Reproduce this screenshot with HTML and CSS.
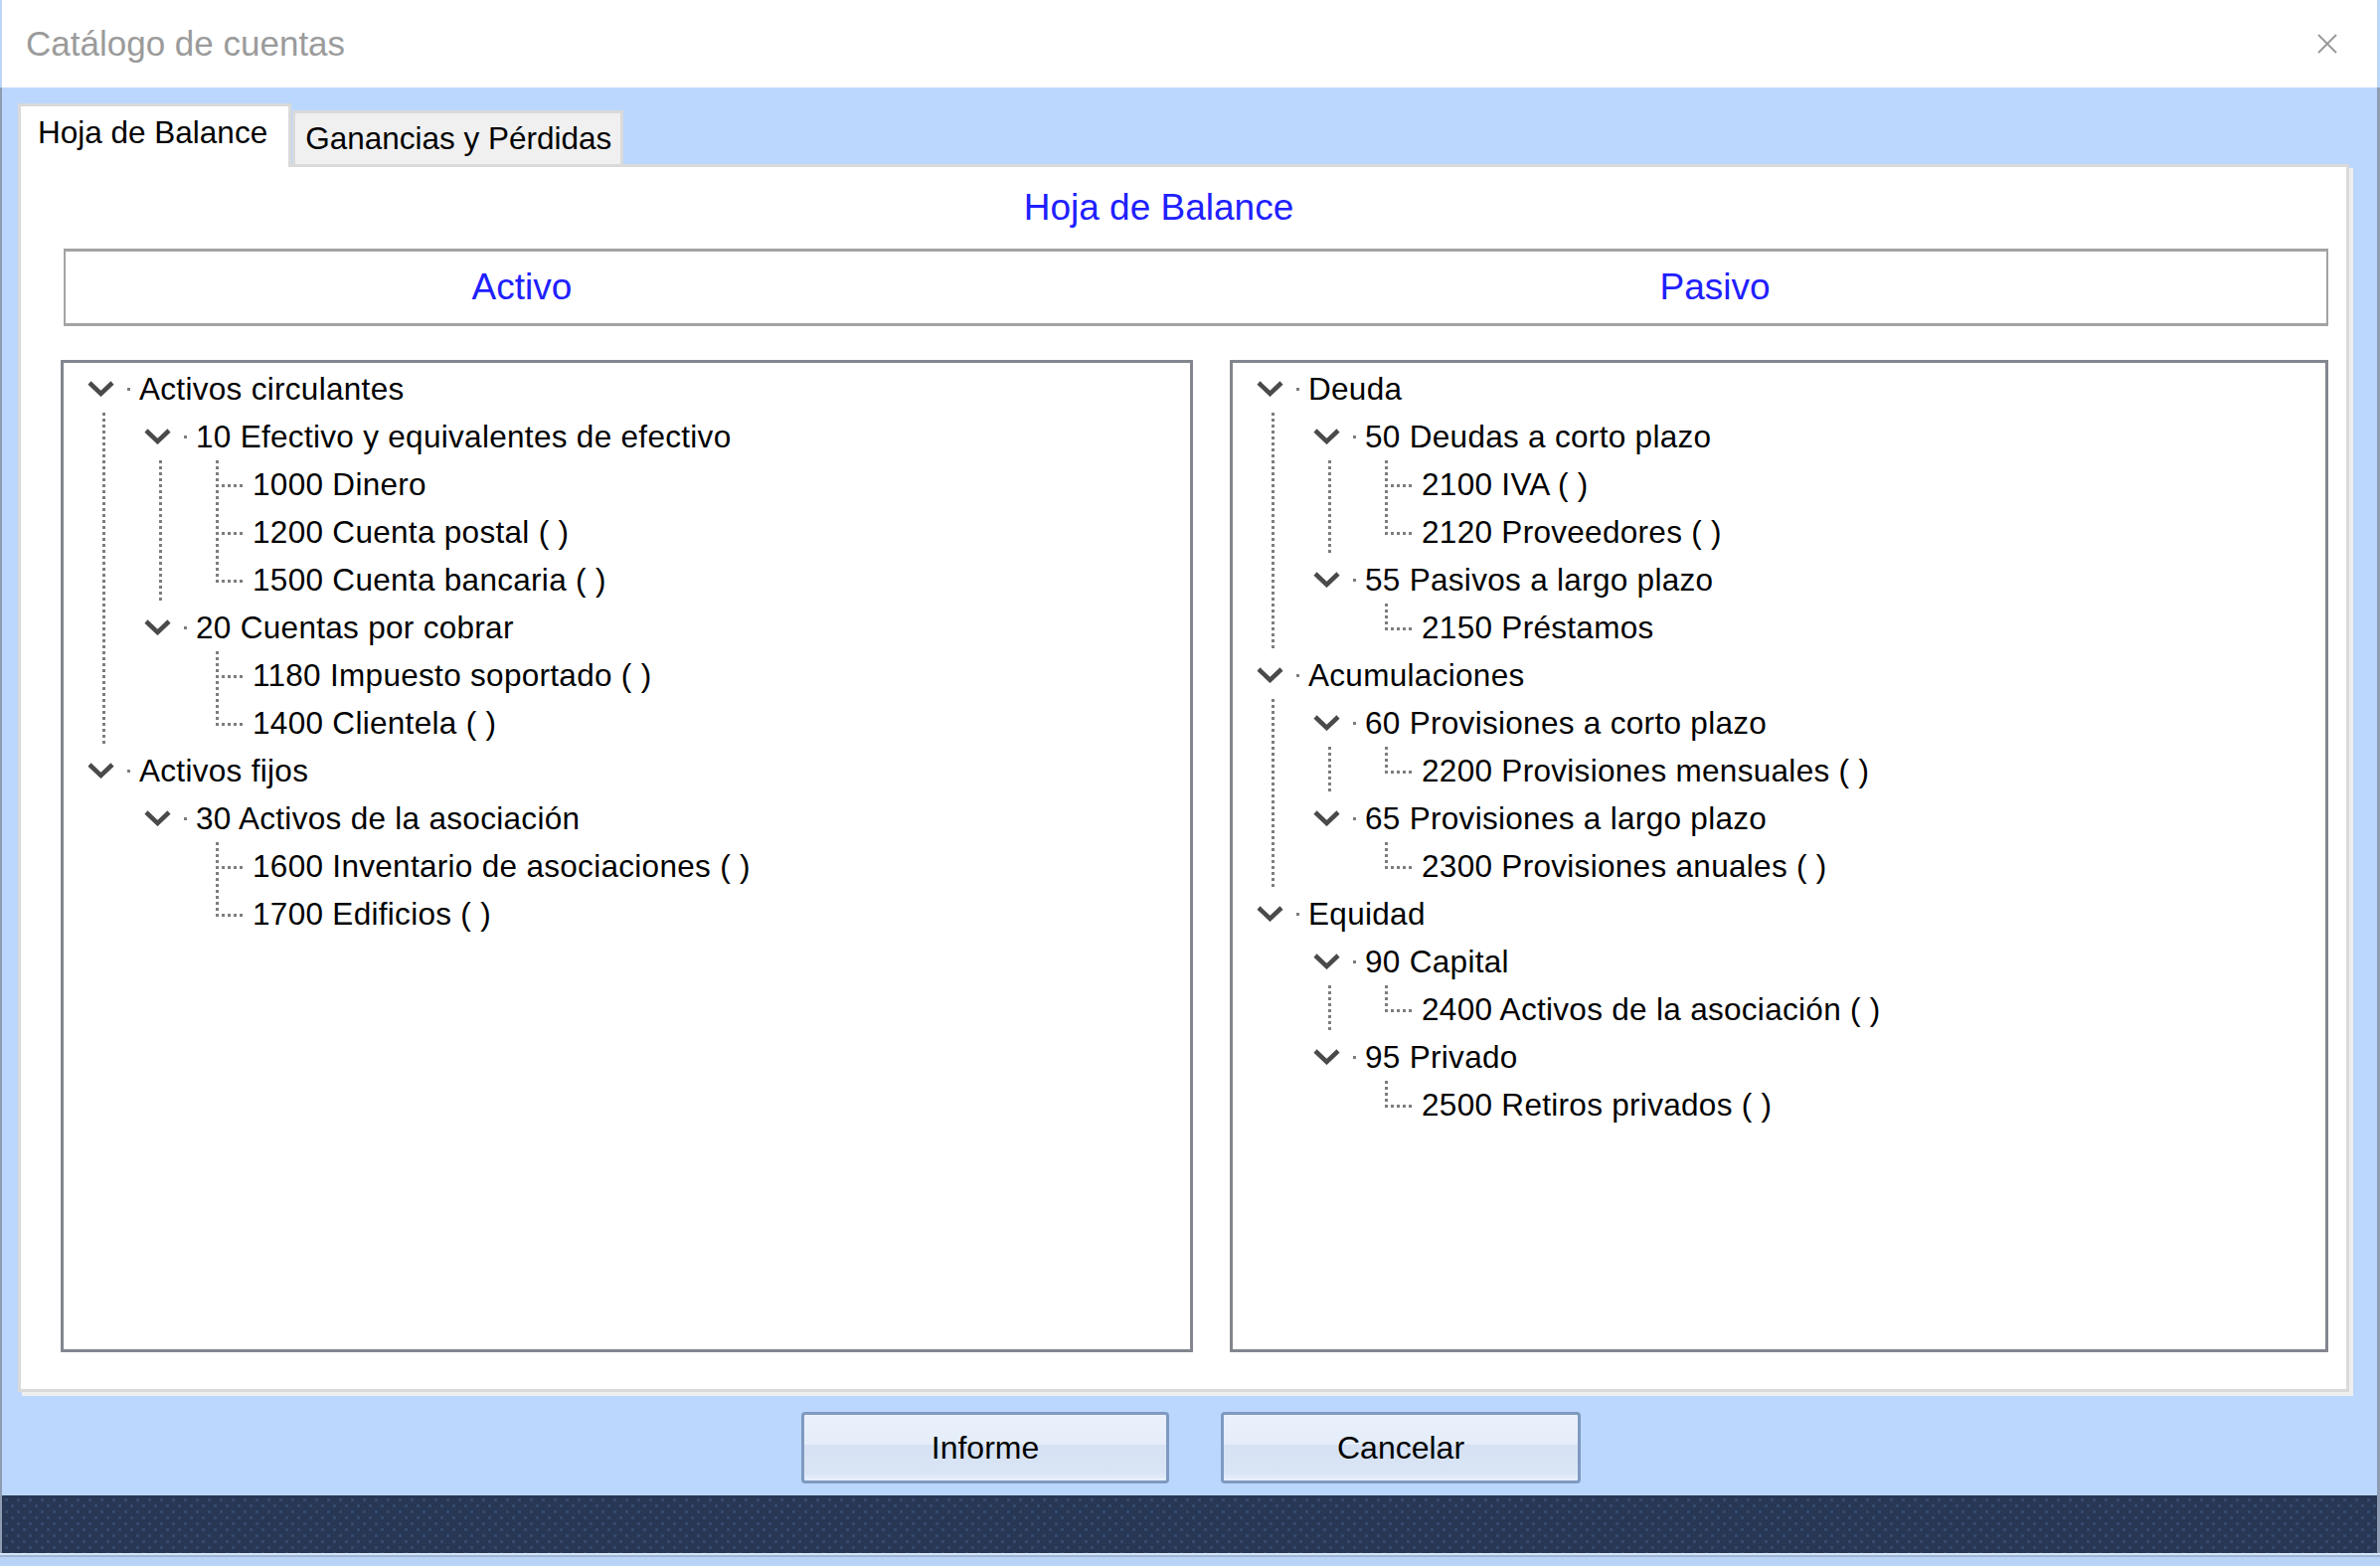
FILE: index.html
```html
<!DOCTYPE html>
<html lang="es">
<head>
<meta charset="utf-8">
<title>Catálogo de cuentas</title>
<link rel="stylesheet" href="styles.css">
</head>
<body>
<div class="window">
  <div class="titlebar">
    <span class="title">Catálogo de cuentas</span>
    <svg class="close" width="20" height="20" viewBox="0 0 20 20"><path d="M1 1 L19 19 M19 1 L1 19" stroke="#9a9a9a" stroke-width="2" fill="none"/></svg>
  </div>
  <div class="main">
    <div class="tabs">
      <div class="tab active">Hoja de Balance</div>
      <div class="tab">Ganancias y Pérdidas</div>
    </div>
    <div class="panel">
      <div class="heading">Hoja de Balance</div>
      <div class="header-box">
        <div class="hcell">Activo</div>
        <div class="hcell">Pasivo</div>
      </div>
      <div class="trees">
        <div class="tree">
          <div class="row"><span class="node"><svg width="27" height="16" viewBox="0 0 27 16"><path d="M2 2 L13.5 13 L25 2" stroke="#4a4a4a" stroke-width="4.5" fill="none"/></svg><i class="dot"></i></span><span class="t">Activos circulantes</span></div>
          <div class="row"><span class="g on"></span><span class="node"><svg width="27" height="16" viewBox="0 0 27 16"><path d="M2 2 L13.5 13 L25 2" stroke="#4a4a4a" stroke-width="4.5" fill="none"/></svg><i class="dot"></i></span><span class="t">10 Efectivo y equivalentes de efectivo</span></div>
          <div class="row"><span class="g on"></span><span class="g on"></span><span class="leaf"></span><span class="t">1000 Dinero</span></div>
          <div class="row"><span class="g on"></span><span class="g on"></span><span class="leaf"></span><span class="t">1200 Cuenta postal ( )</span></div>
          <div class="row"><span class="g on"></span><span class="g on"></span><span class="leaf last"></span><span class="t">1500 Cuenta bancaria ( )</span></div>
          <div class="row"><span class="g on"></span><span class="node"><svg width="27" height="16" viewBox="0 0 27 16"><path d="M2 2 L13.5 13 L25 2" stroke="#4a4a4a" stroke-width="4.5" fill="none"/></svg><i class="dot"></i></span><span class="t">20 Cuentas por cobrar</span></div>
          <div class="row"><span class="g on"></span><span class="g"></span><span class="leaf"></span><span class="t">1180 Impuesto soportado ( )</span></div>
          <div class="row"><span class="g on"></span><span class="g"></span><span class="leaf last"></span><span class="t">1400 Clientela ( )</span></div>
          <div class="row"><span class="node"><svg width="27" height="16" viewBox="0 0 27 16"><path d="M2 2 L13.5 13 L25 2" stroke="#4a4a4a" stroke-width="4.5" fill="none"/></svg><i class="dot"></i></span><span class="t">Activos fijos</span></div>
          <div class="row"><span class="g"></span><span class="node"><svg width="27" height="16" viewBox="0 0 27 16"><path d="M2 2 L13.5 13 L25 2" stroke="#4a4a4a" stroke-width="4.5" fill="none"/></svg><i class="dot"></i></span><span class="t">30 Activos de la asociación</span></div>
          <div class="row"><span class="g"></span><span class="g"></span><span class="leaf"></span><span class="t">1600 Inventario de asociaciones ( )</span></div>
          <div class="row"><span class="g"></span><span class="g"></span><span class="leaf last"></span><span class="t">1700 Edificios ( )</span></div>
        </div>
        <div class="tree">
          <div class="row"><span class="node"><svg width="27" height="16" viewBox="0 0 27 16"><path d="M2 2 L13.5 13 L25 2" stroke="#4a4a4a" stroke-width="4.5" fill="none"/></svg><i class="dot"></i></span><span class="t">Deuda</span></div>
          <div class="row"><span class="g on"></span><span class="node"><svg width="27" height="16" viewBox="0 0 27 16"><path d="M2 2 L13.5 13 L25 2" stroke="#4a4a4a" stroke-width="4.5" fill="none"/></svg><i class="dot"></i></span><span class="t">50 Deudas a corto plazo</span></div>
          <div class="row"><span class="g on"></span><span class="g on"></span><span class="leaf"></span><span class="t">2100 IVA ( )</span></div>
          <div class="row"><span class="g on"></span><span class="g on"></span><span class="leaf last"></span><span class="t">2120 Proveedores ( )</span></div>
          <div class="row"><span class="g on"></span><span class="node"><svg width="27" height="16" viewBox="0 0 27 16"><path d="M2 2 L13.5 13 L25 2" stroke="#4a4a4a" stroke-width="4.5" fill="none"/></svg><i class="dot"></i></span><span class="t">55 Pasivos a largo plazo</span></div>
          <div class="row"><span class="g on"></span><span class="g"></span><span class="leaf last"></span><span class="t">2150 Préstamos</span></div>
          <div class="row"><span class="node"><svg width="27" height="16" viewBox="0 0 27 16"><path d="M2 2 L13.5 13 L25 2" stroke="#4a4a4a" stroke-width="4.5" fill="none"/></svg><i class="dot"></i></span><span class="t">Acumulaciones</span></div>
          <div class="row"><span class="g on"></span><span class="node"><svg width="27" height="16" viewBox="0 0 27 16"><path d="M2 2 L13.5 13 L25 2" stroke="#4a4a4a" stroke-width="4.5" fill="none"/></svg><i class="dot"></i></span><span class="t">60 Provisiones a corto plazo</span></div>
          <div class="row"><span class="g on"></span><span class="g on"></span><span class="leaf last"></span><span class="t">2200 Provisiones mensuales ( )</span></div>
          <div class="row"><span class="g on"></span><span class="node"><svg width="27" height="16" viewBox="0 0 27 16"><path d="M2 2 L13.5 13 L25 2" stroke="#4a4a4a" stroke-width="4.5" fill="none"/></svg><i class="dot"></i></span><span class="t">65 Provisiones a largo plazo</span></div>
          <div class="row"><span class="g on"></span><span class="g"></span><span class="leaf last"></span><span class="t">2300 Provisiones anuales ( )</span></div>
          <div class="row"><span class="node"><svg width="27" height="16" viewBox="0 0 27 16"><path d="M2 2 L13.5 13 L25 2" stroke="#4a4a4a" stroke-width="4.5" fill="none"/></svg><i class="dot"></i></span><span class="t">Equidad</span></div>
          <div class="row"><span class="g"></span><span class="node"><svg width="27" height="16" viewBox="0 0 27 16"><path d="M2 2 L13.5 13 L25 2" stroke="#4a4a4a" stroke-width="4.5" fill="none"/></svg><i class="dot"></i></span><span class="t">90 Capital</span></div>
          <div class="row"><span class="g"></span><span class="g on"></span><span class="leaf last"></span><span class="t">2400 Activos de la asociación ( )</span></div>
          <div class="row"><span class="g"></span><span class="node"><svg width="27" height="16" viewBox="0 0 27 16"><path d="M2 2 L13.5 13 L25 2" stroke="#4a4a4a" stroke-width="4.5" fill="none"/></svg><i class="dot"></i></span><span class="t">95 Privado</span></div>
          <div class="row"><span class="g"></span><span class="g"></span><span class="leaf last"></span><span class="t">2500 Retiros privados ( )</span></div>
        </div>
      </div>
    </div>
    <div class="buttons">
      <button class="btn btn-informe">Informe</button>
      <button class="btn btn-cancelar">Cancelar</button>
    </div>
  </div>
  <div class="status"></div>
  <div class="bottom"></div>
</div>
</body>
</html>
```

FILE: styles.css
```css
html, body {
  margin: 0;
  padding: 0;
}
body {
  width: 2394px;
  height: 1575px;
  overflow: hidden;
  background: #b9d3f7;
  font-family: "Liberation Sans", Arial, sans-serif;
  color: #000;
}
.window {
  width: 2394px;
}
.titlebar {
  box-sizing: border-box;
  height: 88px;
  background: #fff;
  border-left: 2px solid #bcd6f8;
  border-right: 3px solid #bcd6f8;
  display: flex;
  align-items: center;
  justify-content: space-between;
  padding: 0 40px 0 24px;
}
.title {
  font-size: 35px;
  color: #9b9b9b;
}
.close {
  display: block;
}
.main {
  box-sizing: border-box;
  height: 1416px;
  background: #bbd7fd;
  border-left: 2px solid #8f9db3;
  border-right: 3px solid #8f9db3;
  padding: 16px 0 12px 16px;
}
.tabs {
  display: flex;
  align-items: flex-end;
  height: 61px;
  position: relative;
  z-index: 1;
}
.tab {
  box-sizing: border-box;
  height: 54px;
  border: 3px solid #dadada;
  border-bottom: none;
  background: #f0f0f0;
  font-size: 31.5px;
  line-height: 40px;
  padding: 5px 9px 0 10px;
  white-space: nowrap;
}
.tab.active {
  height: 64px;
  margin-bottom: -3px;
  background: #fff;
  padding: 6px 21px 0 17px;
  margin-right: 1px;
}
.panel {
  box-sizing: border-box;
  width: 2345px;
  height: 1235px;
  background: #fff;
  border: 3px solid #dadada;
  box-shadow: 4px 4px 0 #efefef;
  padding: 0 0 37px 0;
}
.heading {
  margin-top: 16px;
  height: 50px;
  line-height: 50px;
  text-align: center;
  padding-right: 50px;
  font-size: 37px;
  color: #2020ff;
}
.header-box {
  box-sizing: border-box;
  margin: 16px 18px 0 43px;
  height: 78px;
  border-top: 3px solid #a3a3a3;
  border-bottom: 3px solid #a3a3a3;
  border-left: 2px solid #a3a3a3;
  border-right: 2px solid #a3a3a3;
  display: grid;
  grid-template-columns: 918px 1fr;
  column-gap: 126px;
  align-items: center;
}
.hcell {
  text-align: center;
  font-size: 37px;
  color: #2020ff;
}
.trees {
  margin: 34px 18px 0 40px;
  height: 998px;
  display: grid;
  grid-template-columns: 1139px 1fr;
  column-gap: 37px;
}
.tree {
  box-sizing: border-box;
  border: 3px solid #83868e;
  background: #fff;
  padding-top: 2px;
  overflow: hidden;
}
.row {
  display: flex;
  align-items: center;
  height: 48px;
}
.g {
  flex: none;
  width: 57px;
  align-self: stretch;
}
.g.on {
  background-image: repeating-linear-gradient(to bottom, #7d7d7d 0 3px, transparent 3px 6px);
  background-size: 3px 100%;
  background-position: 39px 0;
  background-repeat: no-repeat;
}
.node {
  flex: none;
  width: 76px;
  display: flex;
  align-items: center;
  padding-left: 24px;
  box-sizing: border-box;
}
.node svg {
  display: block;
}
.dot {
  display: block;
  width: 3px;
  height: 3px;
  margin-left: 13px;
  background: #7d7d7d;
}
.leaf {
  flex: none;
  width: 76px;
  align-self: stretch;
  background-image:
    repeating-linear-gradient(to bottom, #7d7d7d 0 3px, transparent 3px 6px),
    repeating-linear-gradient(to right, #7d7d7d 0 3px, transparent 3px 6px);
  background-size: 3px 100%, 28px 3px;
  background-position: 39px 0, 39px 24px;
  background-repeat: no-repeat;
}
.leaf.last {
  background-size: 3px 27px, 28px 3px;
}
.t {
  font-size: 31.5px;
  letter-spacing: 0.3px;
  white-space: nowrap;
}
.buttons {
  box-sizing: border-box;
  width: 2345px;
  margin-top: 20px;
  padding-left: 15px;
  display: flex;
  justify-content: center;
  gap: 52px;
}
.btn {
  box-sizing: border-box;
  height: 72px;
  border: 3px solid #7f9ac0;
  border-radius: 4px;
  background: linear-gradient(to bottom, #eaf1fb 0%, #e4edf9 45%, #d6e2f3 46%, #d9e5f5 88%, #e8f0fb 100%);
  font-family: "Liberation Sans", Arial, sans-serif;
  font-size: 32px;
  color: #000;
  padding: 0;
}
.btn-informe {
  width: 370px;
}
.btn-cancelar {
  width: 362px;
}
.status {
  box-sizing: border-box;
  height: 58px;
  border-left: 2px solid #8f9db3;
  border-right: 3px solid #8f9db3;
  background-color: #283754;
  background-image:
    conic-gradient(from 270deg at 3px 3px, #344a6e 90deg, transparent 0),
    conic-gradient(from 270deg at 3px 3px, #344a6e 90deg, transparent 0);
  background-size: 12px 12px, 12px 12px;
  background-position: 3px 3px, 9px 9px;
}
.bottom {
  height: 13px;
  background: linear-gradient(to bottom, #d7e5f8 0 2px, #9fb5d6 2px 4px, #b9d3f7 4px);
}
```
